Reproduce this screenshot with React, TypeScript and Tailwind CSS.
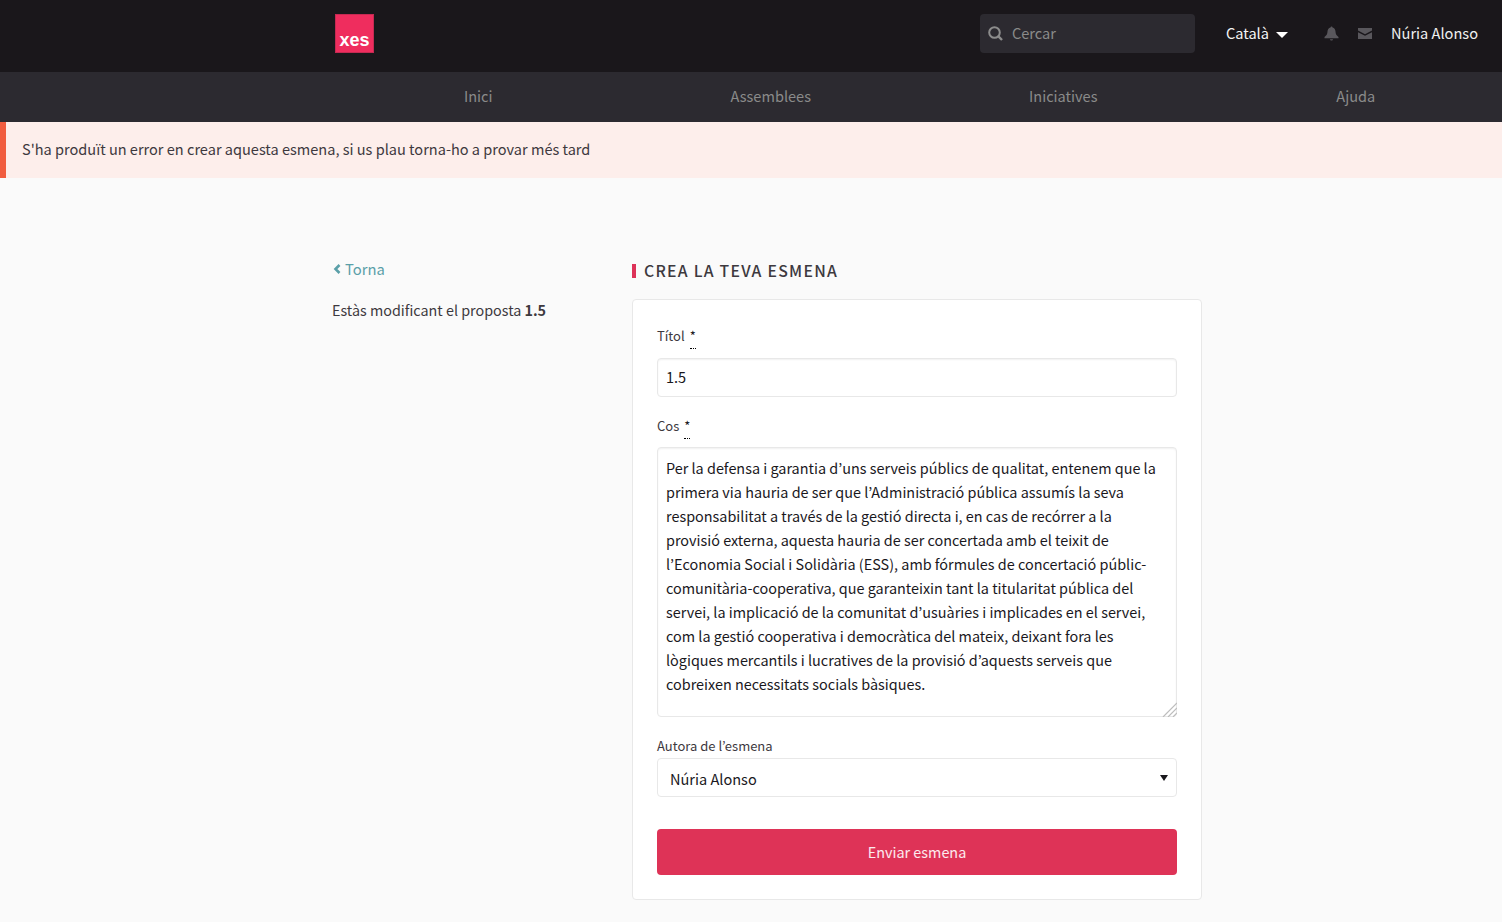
import React from "react";

const FONT = "font-['Noto_Sans_CJK_KR','Noto_Sans',sans-serif]";

const BODY = "Per la defensa i garantia d’uns serveis públics de qualitat, entenem que la primera via hauria de ser que l’Administració pública assumís la seva responsabilitat a través de la gestió directa i, en cas de recórrer a la provisió externa, aquesta hauria de ser concertada amb el teixit de l’Economia Social i Solidària (ESS), amb fórmules de concertació públic-comunitària-cooperativa, que garanteixin tant la titularitat pública del servei, la implicació de la comunitat d’usuàries i implicades en el servei, com la gestió cooperativa i democràtica del mateix, deixant fora les lògiques mercantils i lucratives de la provisió d’aquests serveis que cobreixen necessitats socials bàsiques.";

function Req() {
  return <abbr className="ml-[5px] border-b border-dotted border-black no-underline text-[13px] leading-[21px] inline-block h-[24px] text-[#1a181d]">*</abbr>;
}

export default function App() {
  return (
    <div className={`${FONT} min-h-[922px] h-[922px] overflow-hidden bg-[#fafafa] text-[#3d393e] text-[14.55px]`}>
      <header className="h-[72px] bg-[#1a171b] flex items-start pt-[14px] pl-[335px] pr-[24px]">
        <div className="w-[39px] h-[39px] bg-[#ef2d5e] border border-[#c52a52] flex items-end justify-center overflow-hidden">
          <span className="font-['Liberation_Sans',sans-serif] font-bold text-white text-[18px] leading-[23px]">xes</span>
        </div>
        <div className="ml-auto h-[39px] flex items-center text-[14.6px]">
          <div className="w-[215px] h-[39px] rounded-[4px] bg-[#2c2a30] flex items-center pl-[8px]">
            <svg width="15" height="15" viewBox="0 0 15 15" fill="none" className="text-[#8c8c8c]">
              <circle cx="6.500" cy="6.500" r="5.300" stroke="currentColor" strokeWidth="2" />
              <path d="M10.200 10.200L14 14" stroke="currentColor" strokeWidth="2.400" />
            </svg>
            <span className="ml-[9px] pb-[2px] text-[#8a8a8a] leading-[20px]">Cercar</span>
          </div>
          <div className="ml-[31px] flex items-center text-[#f5f5f5] leading-[20px]">
            <span className="pb-[2px]">Català</span>
            <span className="ml-[7px] mt-[3px] w-0 h-0 border-x-[6px] border-x-transparent border-t-[6px] border-t-white" />
          </div>
          <svg width="15" height="15" viewBox="0 0 15 15" className="ml-[36px] text-[#59575c]" fill="currentColor">
            <path d="M7.500 0.500c.6 0 1 .4 1 .9 2 .5 2.900 2 3 4.100.1 2.600 1 4 3 5.500v1.200H.5v-1.200c2-1.500 2.900-2.900 3-5.500.1-2.100 1-3.600 3-4.100 0-.5.400-.9 1-.9z" />
            <path d="M6 13.200h3c0 .8-.7 1.400-1.500 1.400S6 14 6 13.200z" />
          </svg>
          <svg width="14" height="11" viewBox="0 0 14 11" className="ml-[19px] text-[#59575c]" fill="currentColor">
            <path d="M0 0h14v2.600L7 6.200 0 2.600z" />
            <path d="M0 4.200l7 3.600 7-3.600V11H0z" />
          </svg>
          <span className="ml-[19px] pb-[2px] text-[#f0f0f0] leading-[20px]">Núria Alonso</span>
        </div>
      </header>

      <nav className="h-[50px] bg-[#2c2a30] pl-[332px] grid grid-cols-4 items-center text-center text-[#8a8a8a] leading-[20px] pb-[3px]">
        <span>Inici</span>
        <span>Assemblees</span>
        <span>Iniciatives</span>
        <span>Ajuda</span>
      </nav>

      <div className="h-[56px] bg-[#fdeeeb] border-l-[6px] border-l-[#f15c3f] pl-[16px] pb-[2px] flex items-center leading-[20px]">
        S'ha produït un error en crear aquesta esmena, si us plau torna-ho a provar més tard
      </div>

      <main className="flex pl-[332px] pt-[81px]">
        <aside className="w-[300px]">
          <div className="flex items-center text-[#5a9fa8] leading-[20px] text-[14.8px]">
            <svg width="8" height="10" viewBox="0 0 8 10" className="ml-[1px] mr-[4px]" fill="none">
              <path d="M6.500 1L2.500 5l4 4" stroke="currentColor" strokeWidth="2.600" />
            </svg>
            Torna
          </div>
          <p className="mt-[21px] leading-[20px] text-[14.35px]">
            Estàs modificant el proposta <strong className="font-bold">1.5</strong>
          </p>
        </aside>

        <section className="w-[570px]">
          <h1 className="mt-[5px] h-[14px] border-l-[4px] border-l-[#dd3258] pl-[8px] text-[15.8px] font-medium tracking-[1.25px] leading-[14px] flex items-center text-[#3d393e]">
            CREA LA TEVA ESMENA
          </h1>
          <div className="mt-[21px] h-[601px] rounded-[4px] border border-[#e8e8e8] bg-white px-[24px] pt-[25px]">
            <label className="block h-[33px] text-[13px] leading-[21px] text-[#3d393e]">
              Títol<Req />
            </label>
            <input
              readOnly
              value="1.5"
              className="block w-full h-[39px] rounded-[4px] border border-[#e8e8e8] bg-white px-[8px] pb-[2px] text-[#1a181d] outline-none shadow-[inset_0_1px_2px_rgba(0,0,0,0.06)]"
            />
            <label className="block mt-[18px] h-[32px] text-[13px] leading-[21px] text-[#3d393e]">
              Cos<Req />
            </label>
            <div className="relative">
              <textarea
                readOnly
                value={BODY}
                className="block w-full h-[270px] rounded-[4px] border border-[#e8e8e8] bg-white px-[8px] pt-[8px] text-[14.42px] leading-[24px] text-[#1a181d] outline-none resize-none shadow-[inset_0_1px_2px_rgba(0,0,0,0.06)]"
              />
              <svg width="15" height="15" viewBox="0 0 15 15" fill="none" stroke="#bdbdbd" strokeWidth="1.200" className="absolute right-[0px] bottom-[0px] pointer-events-none">
                <path d="M1 15L15 1M6 15L15 6M11 15L15 11" />
              </svg>
            </div>
            <label className="block mt-[18px] h-[23px] text-[13px] leading-[21px] text-[#3d393e]">
              Autora de l’esmena
            </label>
            <div className="relative h-[39px] rounded-[4px] border border-[#e8e8e8] bg-white pl-[12px] pt-[2px] flex items-center text-[#1a181d]">
              Núria Alonso
              <span className="absolute right-[8px] top-[16px] w-0 h-0 border-x-[4.500px] border-x-transparent border-t-[6px] border-t-[#1a181d]" />
            </div>
            <button className="block mt-[32px] w-full h-[46px] rounded-[4px] bg-[#de3357] text-white/90 leading-[20px] text-[14.4px]">
              Enviar esmena
            </button>
          </div>
        </section>
      </main>
    </div>
  );
}
